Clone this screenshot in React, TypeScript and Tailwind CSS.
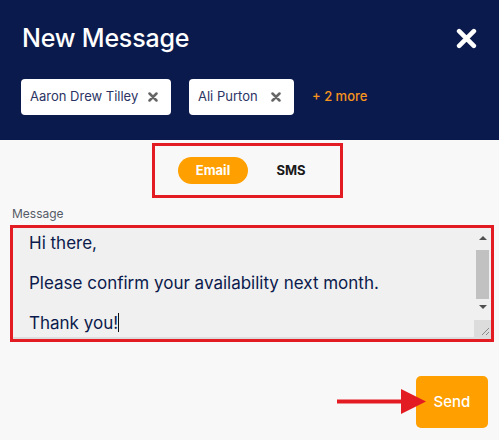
import { useState } from "react";

const recipients = [
  { name: "Aaron Drew Tilley", width: "w-[150px]" },
  { name: "Ali Purton", width: "w-[105px]" },
];

function XIcon({ className }: { className: string }) {
  return (
    <svg viewBox="0 0 20 20" className={className} fill="none" stroke="currentColor" strokeLinecap="round">
      <path d="M3 3 L17 17 M17 3 L3 17" />
    </svg>
  );
}

export default function App() {
  const [channel, setChannel] = useState("Email");

  return (
    <div className="w-[499px] h-[440px] bg-[#f8f8f8] flex flex-col font-['Inter',sans-serif] overflow-hidden">
      {/* Header */}
      <div className="bg-[#0b1a4c] h-[140px] shrink-0 pt-[23px] pl-[22px] pr-[22px]">
        <div className="flex items-center justify-between h-[30px]">
          <h1 className="text-[25px] font-medium text-white leading-[30px] tracking-[-0.2px]">New Message</h1>
          <XIcon className="w-[21px] h-[21px] text-white [stroke-width:4.4]" />
        </div>
        <div className="flex items-center gap-[18px] mt-[26px] -ml-[1px]">
          {recipients.map((r) => (
            <div key={r.name} className={`${r.width} h-[36px] rounded-[4px] bg-white flex items-center justify-between pl-[9px] pr-[13px]`}>
              <span className="text-[13px] text-[#2b3464]">{r.name}</span>
              <XIcon className="w-[10px] h-[10px] text-[#666] [stroke-width:5]" />
            </div>
          ))}
          <span className="text-[13px] font-medium text-[#f7941d]">+ 2 more</span>
        </div>
      </div>

      {/* Channel toggle */}
      <div className="ml-[152px] mt-[3px] w-[191px] h-[55px] border-[3px] border-[#e31b23] flex items-center pl-[23px] gap-[8px]">
        {["Email", "SMS"].map((c) => (
          <button
            key={c}
            onClick={() => setChannel(c)}
            className={`w-[70px] h-[27px] rounded-full text-[13px] font-bold ${channel === c ? "bg-[#ffa000] text-white" : "text-[#1a1a1a]"}`}
          >
            {c}
          </button>
        ))}
      </div>

      {/* Message */}
      <label className="text-[12px] text-[#555b66] ml-[12px] mt-[8px] leading-[16px]">Message</label>
      <div className="ml-[10px] mt-[3px] w-[484px] h-[117px] border-[3px] border-[#e31b23]">
        <div className="h-full bg-[#f0f0f0] border-b-[2px] border-[#dcdcdc] flex">
          <div className="flex-1 pl-[16px] pt-[5px] text-[17px] leading-[20px] text-[#0b1a4c] overflow-hidden">
            <p>Hi there,</p>
            <p className="mt-[20px]">Please confirm your availability next month.</p>
            <p className="mt-[20px]">
              Thank you!<span className="inline-block w-[1px] h-[19px] bg-[#111] align-[-3px]" />
            </p>
          </div>
          {/* scrollbar */}
          <div className="w-[17px] flex flex-col items-center bg-[#f0f0f0]">
            <div className="h-[18px] flex items-center justify-center pt-[2px]">
              <div className="w-0 h-0 border-l-[4px] border-r-[4px] border-b-[4px] border-l-transparent border-r-transparent border-b-[#505050]" />
            </div>
            <div className="w-[13px] h-[49px] bg-[#c1c1c1] mt-[4px]" />
            <div className="h-[12px] flex items-center justify-center mt-[2px]">
              <div className="w-0 h-0 border-l-[4px] border-r-[4px] border-t-[4px] border-l-transparent border-r-transparent border-t-[#505050]" />
            </div>
            <div className="mt-auto w-[17px] h-[17px] bg-[#dcdcdc] flex items-end justify-end p-[2px]">
              <svg viewBox="0 0 8 8" className="w-[8px] h-[8px]" stroke="#888" strokeWidth="1">
                <path d="M8 1 L1 8 M8 5 L5 8" />
              </svg>
            </div>
          </div>
        </div>
      </div>

      {/* Send */}
      <div className="flex items-center justify-end mt-[34px] mr-[11px]">
        <svg viewBox="0 0 90 26" className="w-[90px] h-[26px] relative z-10 -mr-[11px]">
          <rect x="0" y="10.5" width="67" height="4" fill="#e31b23" />
          <polygon points="64,0 89,12.5 64,25" fill="#e31b23" />
        </svg>
        <button className="w-[72px] h-[52px] rounded-[5px] bg-[#ffa000] text-white text-[15px] font-medium">Send</button>
      </div>
    </div>
  );
}
